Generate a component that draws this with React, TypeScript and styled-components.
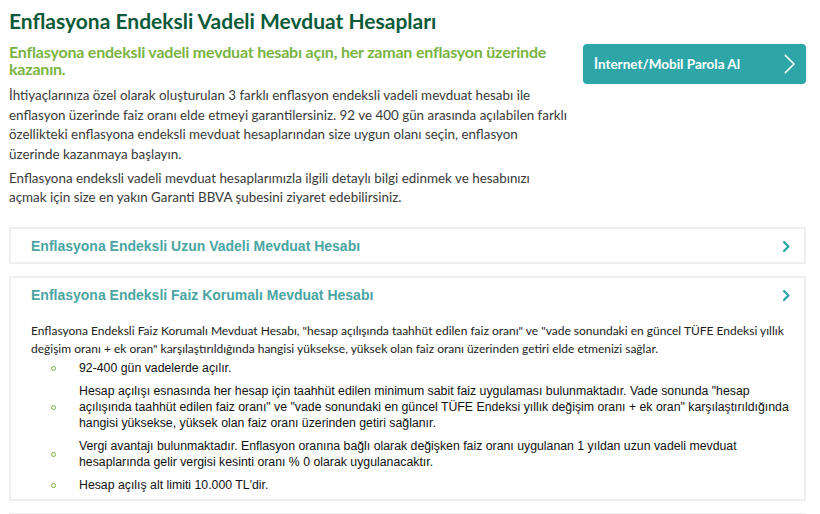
import styled, { createGlobalStyle } from "styled-components";

const GlobalStyle = createGlobalStyle`
  html, body {
    margin: 0;
    padding: 0;
    background: #ffffff;
  }
  body {
    font-family: "Lato", "Noto Sans", sans-serif;
    color: #333333;
  }
`

const bullets = [
    "92-400 gün vadelerde açılır.",
    "Hesap açılışı esnasında her hesap için taahhüt edilen minimum sabit faiz uygulaması bulunmaktadır. Vade sonunda \"hesap\naçılışında taahhüt edilen faiz oranı\" ve \"vade sonundaki en güncel TÜFE Endeksi yıllık değişim oranı + ek oran\" karşılaştırıldığında\nhangisi yüksekse, yüksek olan faiz oranı üzerinden getiri sağlanır.",
    "Vergi avantajı bulunmaktadır. Enflasyon oranına bağlı olarak değişken faiz oranı uygulanan 1 yıldan uzun vadeli mevduat\nhesaplarında gelir vergisi kesinti oranı % 0 olarak uygulanacaktır.",
    "Hesap açılış alt limiti 10.000 TL'dir.",
]

const Chevron = ({size = 10, color = "#2aa4a5", stroke = 2}: {size?: number, color?: string, stroke?: number}) => (
    <svg width={size * 0.6} height={size} viewBox="0 0 6 10" fill="none">
        <path d="M1 1 L5 5 L1 9" stroke={color} strokeWidth={stroke} strokeLinecap="round" strokeLinejoin="round" vectorEffect="non-scaling-stroke"/>
    </svg>
)

export default function App() {
    return (
        <Page>
            <GlobalStyle/>
            <Title>Enflasyona Endeksli Vadeli Mevduat Hesapları</Title>
            <Intro>
                <IntroText>
                    <Lead>Enflasyona endeksli vadeli mevduat hesabı açın, her zaman enflasyon üzerinde kazanın.</Lead>
                    <Para>
                        İhtiyaçlarınıza özel olarak oluşturulan 3 farklı enflasyon endeksli vadeli mevduat hesabı ile<br/>
                        enflasyon üzerinde faiz oranı elde etmeyi garantilersiniz. 92 ve 400 gün arasında açılabilen farklı<br/>
                        özellikteki enflasyona endeksli mevduat hesaplarından size uygun olanı seçin, enflasyon<br/>
                        üzerinde kazanmaya başlayın.
                    </Para>
                    <Para>
                        Enflasyona endeksli vadeli mevduat hesaplarımızla ilgili detaylı bilgi edinmek ve hesabınızı<br/>
                        açmak için size en yakın Garanti BBVA şubesini ziyaret edebilirsiniz.
                    </Para>
                </IntroText>
                <CtaButton>
                    <span>İnternet/Mobil Parola Al</span>
                    <Chevron size={22} color="#ffffff" stroke={1.6}/>
                </CtaButton>
            </Intro>

            <Accordion>
                <AccordionHeader>
                    <AccordionTitle>Enflasyona Endeksli Uzun Vadeli Mevduat Hesabı</AccordionTitle>
                    <Chevron size={11} stroke={2.2}/>
                </AccordionHeader>
            </Accordion>

            <Accordion $open>
                <AccordionHeader>
                    <AccordionTitle>Enflasyona Endeksli Faiz Korumalı Mevduat Hesabı</AccordionTitle>
                    <Chevron size={11} stroke={2.2}/>
                </AccordionHeader>
                <AccordionBody>
                    <BodyText>
                        Enflasyona Endeksli Faiz Korumalı Mevduat Hesabı, "hesap açılışında taahhüt edilen faiz oranı" ve "vade sonundaki en güncel TÜFE Endeksi yıllık<br/>
                        değişim oranı + ek oran" karşılaştırıldığında hangisi yüksekse, yüksek olan faiz oranı üzerinden getiri elde etmenizi sağlar.
                    </BodyText>
                    <BulletList>
                        {bullets.map((b, i) => (
                            <Bullet key={i}>
                                <Dot/>
                                <BulletText>{b}</BulletText>
                            </Bullet>
                        ))}
                    </BulletList>
                </AccordionBody>
            </Accordion>

            <Accordion/>
        </Page>
    )
}

const Page = styled.div`
  width: 820px;
  height: 514px;
  overflow: hidden;
  box-sizing: border-box;
  padding: 8px 14px 0 9px;
  display: flex;
  flex-direction: column;
`

const Title = styled.h1`
  margin: 0;
  font-family: "Lato", sans-serif;
  font-size: 21px;
  font-weight: 700;
  line-height: 26px;
  color: #0b5a3a;
`

const Intro = styled.div`
  display: flex;
  flex-direction: row;
  align-items: flex-start;
  justify-content: space-between;
  margin-top: 9px;
  margin-bottom: 3px;
`

const IntroText = styled.div`
  width: 566px;
  display: flex;
  flex-direction: column;
`

const Lead = styled.div`
  font-size: 16px;
  font-weight: 700;
  letter-spacing: -0.2px;
  line-height: 17px;
  color: #79b443;
  margin-bottom: 9px;
`

const Para = styled.p`
  margin: 0 0 4.5px 0;
  font-size: 13.4px;
  line-height: 19.5px;
  color: #3a3a3a;
  white-space: nowrap;
`

const CtaButton = styled.button`
  width: 223px;
  height: 40px;
  margin-top: 1px;
  border: 0;
  border-radius: 4px;
  background: #2ea6a8;
  color: #ffffff;
  font-family: "Lato", sans-serif;
  font-size: 13.5px;
  font-weight: 700;
  display: flex;
  align-items: center;
  justify-content: space-between;
  padding: 0 10px 0 11px;
  cursor: pointer;
`

const Accordion = styled.div<{ $open?: boolean }>`
  margin-top: 12px;
  border: 2px solid #efefef;
  display: flex;
  flex-direction: column;
  padding-bottom: ${p => p.$open ? "6px" : "0"};
  min-height: 32px;
  box-sizing: border-box;
  flex-shrink: 0;
`

const AccordionHeader = styled.div`
  height: 32px;
  display: flex;
  align-items: center;
  justify-content: space-between;
  padding: 1px 14px 0 20px;
`

const AccordionTitle = styled.div`
  font-family: "Liberation Sans", Arial, sans-serif;
  font-size: 14px;
  font-weight: 700;
  color: #4aa5a3;
`

const AccordionBody = styled.div`
  padding: 11px 4px 0 20px;
`

const BodyText = styled.p`
  margin: 0;
  font-family: "Lato", sans-serif;
  font-size: 12px;
  line-height: 18px;
  color: #222222;
  white-space: nowrap;
`

const BulletList = styled.ul`
  list-style: none;
  margin: 2px 0 0 0;
  padding: 0 0 0 20px;
  display: flex;
  flex-direction: column;
  gap: 7px;
`

const Bullet = styled.li`
  display: flex;
  align-items: center;
  gap: 23px;
`

const Dot = styled.span`
  width: 3px;
  height: 3px;
  border: 1.5px solid #7cb342;
  border-radius: 50%;
  flex-shrink: 0;
`

const BulletText = styled.div`
  font-family: "Liberation Sans", Arial, sans-serif;
  font-size: 12.3px;
  line-height: 16px;
  color: #111111;
  white-space: pre-line;
`
